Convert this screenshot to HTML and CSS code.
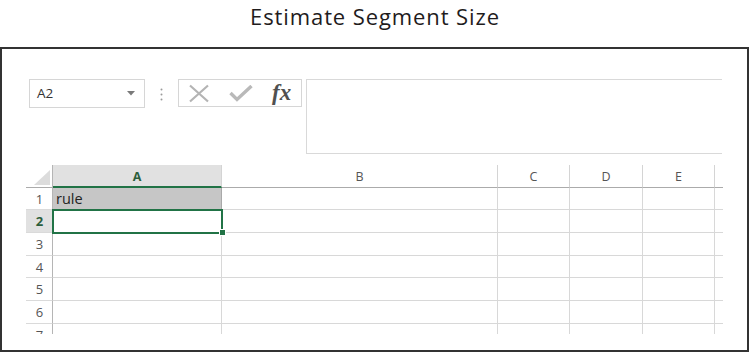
FILE: index.html
```html
<!DOCTYPE html>
<html>
<head>
<meta charset="utf-8">
<link rel="stylesheet" href="styles.css">
</head>
<body>
<h1 class="title">Estimate Segment Size</h1>
<div class="frame">
  <div class="toolbar">
    <div class="namebox">
      <span class="name">A2</span>
      <svg class="caret" width="8" height="5" viewBox="0 0 8 5"><path d="M0 0H8L4 4.5Z" fill="#7a7a7a"/></svg>
    </div>
    <svg class="dots" width="3" height="13" viewBox="0 0 3 13"><circle cx="1.5" cy="1.5" r="1" fill="#9a9a9a"/><circle cx="1.5" cy="6.5" r="1" fill="#9a9a9a"/><circle cx="1.5" cy="11.5" r="1" fill="#9a9a9a"/></svg>
    <div class="fxgroup">
      <svg class="ico" width="22" height="19" viewBox="0 0 22 19"><path d="M2 1.5L20 17.5M20 1.5L2 17.5" stroke="#b4b4b4" stroke-width="2.2" fill="none"/></svg>
      <svg class="ico chk" width="24" height="17" viewBox="0 0 24 17"><path d="M1.5 8L8 14.5L22.5 1" stroke="#b9b9b9" stroke-width="3.4" fill="none"/></svg>
      <span class="fx">fx</span>
    </div>
    <div class="formula"></div>
  </div>
  <div class="grid">
    <div class="c corner"><svg width="16" height="15" viewBox="0 0 16 15"><path d="M16 0V15H0Z" fill="#dcdcdc"/></svg></div>
    <div class="c hd sel-col">A</div>
    <div class="c hd">B</div>
    <div class="c hd">C</div>
    <div class="c hd">D</div>
    <div class="c hd">E</div>
    <div class="c hd end"></div>

    <div class="c rh">1</div>
    <div class="c a1">rule</div>
    <div class="c"></div><div class="c"></div><div class="c"></div><div class="c"></div><div class="c end"></div>

    <div class="c rh sel-row">2</div>
    <div class="c"></div>
    <div class="c"></div><div class="c"></div><div class="c"></div><div class="c"></div><div class="c end"></div>

    <div class="c rh">3</div>
    <div class="c"></div>
    <div class="c"></div><div class="c"></div><div class="c"></div><div class="c"></div><div class="c end"></div>

    <div class="c rh">4</div>
    <div class="c"></div>
    <div class="c"></div><div class="c"></div><div class="c"></div><div class="c"></div><div class="c end"></div>

    <div class="c rh">5</div>
    <div class="c"></div>
    <div class="c"></div><div class="c"></div><div class="c"></div><div class="c"></div><div class="c end"></div>

    <div class="c rh">6</div>
    <div class="c"></div>
    <div class="c"></div><div class="c"></div><div class="c"></div><div class="c"></div><div class="c end"></div>

    <div class="c rh">7</div>
    <div class="c"></div>
    <div class="c"></div><div class="c"></div><div class="c"></div><div class="c"></div><div class="c end"></div>

    <div class="selection"></div>
    <div class="handle"></div>
  </div>
</div>
</body>
</html>
```

FILE: styles.css
```css
* { box-sizing: border-box; }
html, body { margin: 0; padding: 0; background: #fff; }
body { width: 750px; height: 352px; overflow: hidden; font-family: "Open Sans", "Noto Sans", sans-serif; }

.title {
  margin: 0;
  height: 47px;
  padding-top: 2px;
  text-align: center;
  font-size: 22px;
  font-weight: 400;
  line-height: 29px;
  color: #1f1c1d;
  letter-spacing: 0.9px;
}

.frame {
  width: 749px;
  height: 305px;
  border: 2px solid #333;
  padding: 30px 0 0 27px;
}

.toolbar {
  display: flex;
  align-items: flex-start;
  height: 74px;
}

.namebox {
  width: 116px;
  height: 29px;
  border: 1px solid #d6d6d6;
  display: flex;
  align-items: center;
  justify-content: space-between;
  padding: 0 9px 0 7px;
}
.name { font-size: 13.5px; color: #333; line-height: 1; }
.caret { margin-top: -1px; }

.dots { margin: 9px 0 0 15px; }

.fxgroup {
  margin-left: 15px;
  width: 124px;
  height: 28px;
  border: 1px solid #d6d6d6;
  display: flex;
  align-items: center;
  padding-left: 9px;
}
.ico { display: block; }
.chk { margin-left: 19px; margin-top: 1px; }
.fx {
  margin-left: 19px;
  font-family: "Liberation Serif", "DejaVu Serif", serif;
  font-style: italic;
  font-weight: 700;
  font-size: 23px;
  color: #505050;
  letter-spacing: 0;
  line-height: 1;
  margin-top: -2px;
}

.formula {
  margin-left: 4px;
  width: 416px;
  height: 75px;
  border: 1px solid #d9d9d9;
  border-right: none;
}

.grid {
  position: relative;
  margin-top: 12px;
  margin-left: -3px;
  width: 697px;
  height: 169px;
  overflow: hidden;
  display: grid;
  grid-template-columns: 27px 169px 276px 72px 73px 72px 8px;
  grid-template-rows: 23px 22px 23px 23px 22px 23px 23px 23px;
}

.c {
  border-right: 1px solid #d8d8d8;
  border-bottom: 1px solid #d8d8d8;
  display: flex;
  align-items: center;
  justify-content: center;
  font-family: "Open Sans", sans-serif;
  font-size: 13px;
  color: #444;
}
.c.end { border-right: none; }

.corner {
  border-right: 1px solid #b5b5b5;
  border-bottom: 1px solid #ababab;
  align-items: flex-end;
  justify-content: flex-end;
  padding: 0 2px 2px 0;
}
.corner svg { display: block; }

.hd {
  border-bottom: 1px solid #ababab;
  border-right-color: #d4d4d4;
  color: #555;
  font-size: 12.5px;
  padding-top: 1px;
}
.hd.end { border-right: none; }
.hd.sel-col {
  background: #e1e1e1;
  border-bottom: 2px solid #217346;
  color: #2c5e3c;
  font-weight: 700;
}

.rh {
  border-right: 1px solid #b5b5b5;
  border-bottom-color: #dadada;
  font-size: 13px;
  color: #555;
  padding-left: 1px;
}
.rh.sel-row {
  background: #e1e1e1;
  color: #2c5e3c;
  font-weight: 700;
}

.a1 {
  background: #c6c6c6;
  border-right-color: #a9a9a9;
  justify-content: flex-start;
  padding-left: 3px;
  font-size: 14.5px;
  color: #222;
}

.selection {
  position: absolute;
  left: 26px;
  top: 44px;
  width: 171px;
  height: 25px;
  border: 2px solid #217346;
}
.handle {
  position: absolute;
  left: 193px;
  top: 64px;
  width: 7px;
  height: 7px;
  background: #217346;
  border: 1px solid #fff;
}
```
